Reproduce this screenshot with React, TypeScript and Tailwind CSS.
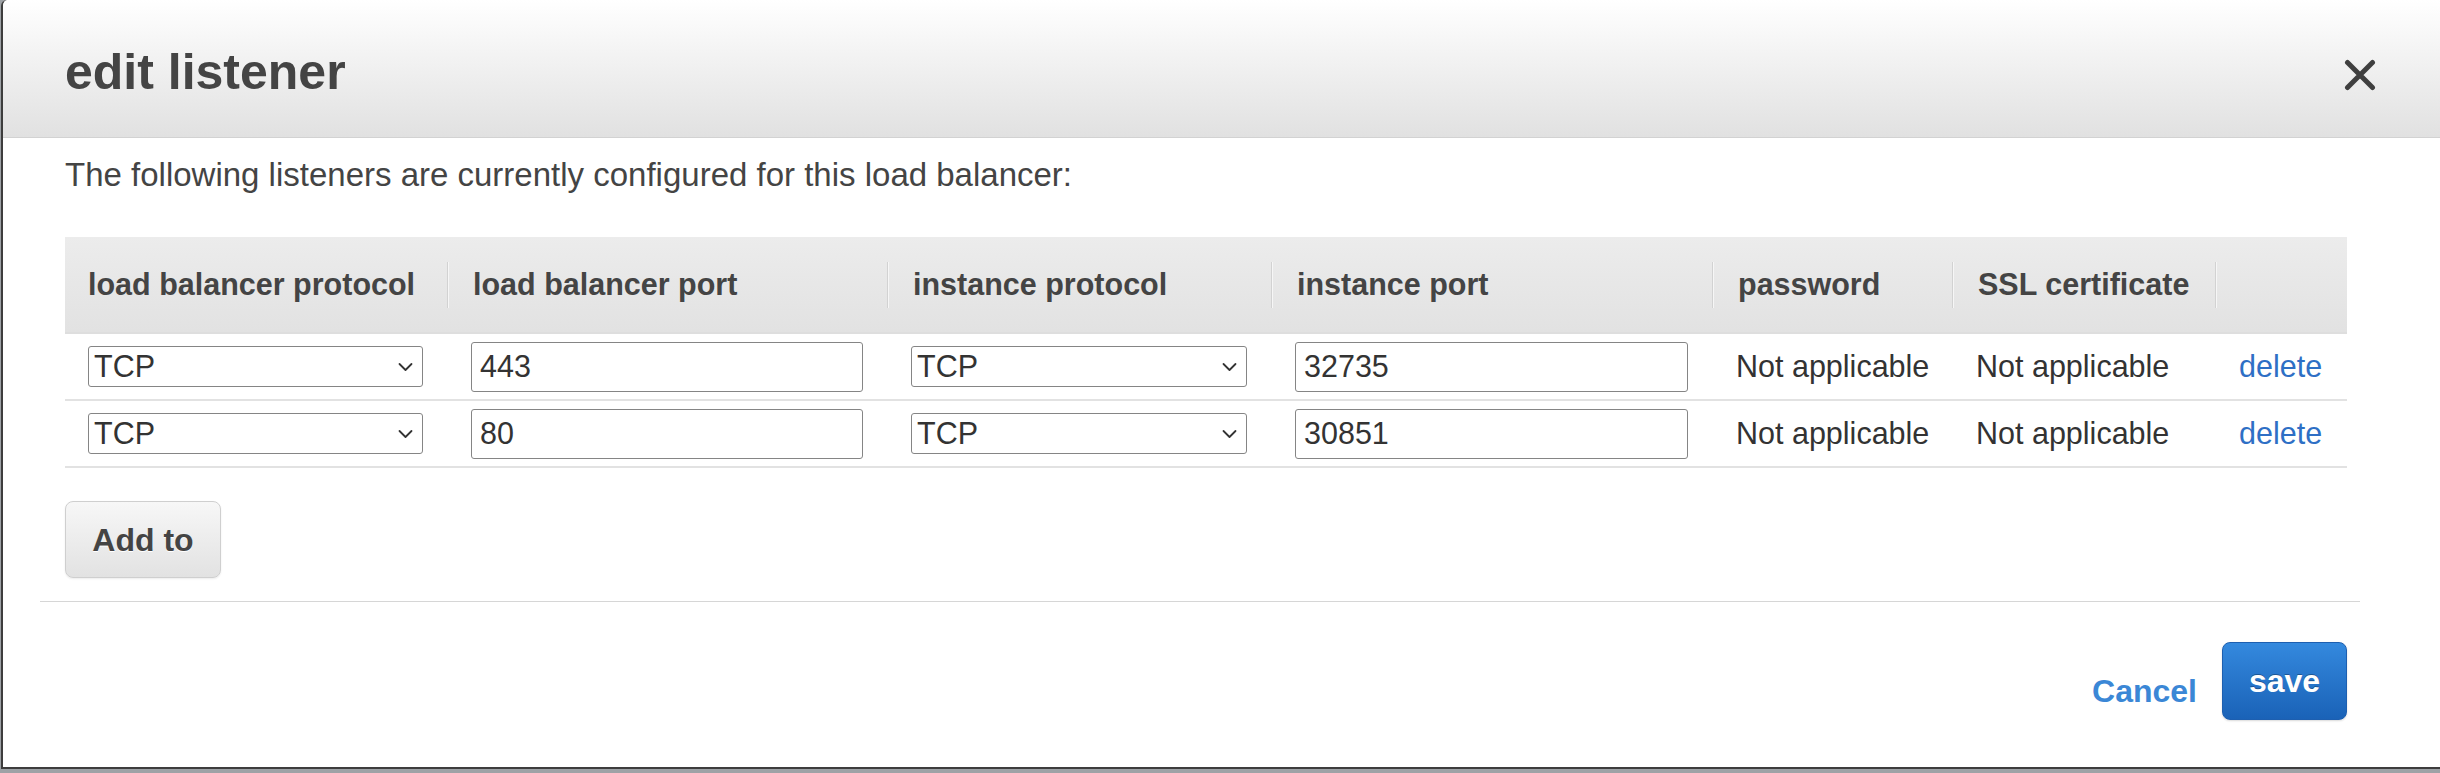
import React from "react";

const gridCols = "grid grid-cols-[382px_440px_384px_441px_240px_263px_132px]";

const headers = [
  "load balancer protocol",
  "load balancer port",
  "instance protocol",
  "instance port",
  "password",
  "SSL certificate",
  "",
];

const listeners = [
  { lbProtocol: "TCP", lbPort: "443", instProtocol: "TCP", instPort: "32735" },
  { lbProtocol: "TCP", lbPort: "80", instProtocol: "TCP", instPort: "30851" },
];

const Chevron = () => (
  <svg width="15" height="10" viewBox="0 0 15 10" fill="none">
    <path
      d="M1.5 2 L7.5 8 L13.5 2"
      stroke="#333"
      strokeWidth="1.8"
      strokeLinecap="round"
      strokeLinejoin="round"
    />
  </svg>
);

function ProtocolSelect({ value }: { value: string }) {
  return (
    <div className="flex h-[41px] w-full items-center justify-between rounded-[3px] border border-[#858585] bg-white pl-[5px] pr-[9px] text-[30.5px] leading-none text-[#333]">
      <span>{value}</span>
      <Chevron />
    </div>
  );
}

function PortInput({ value }: { value: string }) {
  return (
    <input
      type="text"
      defaultValue={value}
      className="h-[50px] w-full rounded-[3px] border border-[#858585] bg-white px-[8px] text-[30.5px] leading-none text-[#333] outline-none"
    />
  );
}

export default function App() {
  return (
    <div className="h-[773px] w-[2440px] overflow-hidden bg-[#9ea2a6] pl-[1px] font-['Liberation_Sans',Arial,sans-serif]">
      <div className="flex h-[769px] flex-col rounded-tl-[6px] border-b-2 border-l-2 border-[#3d3d3d] bg-white">
        {/* header */}
        <div className="flex h-[138px] items-start justify-between rounded-tl-[6px] border-b border-[#d2d2d2] bg-linear-to-b from-white to-[#e1e1e1] pl-[62px] pr-[64px] pt-[47px]">
          <h1 className="text-[50px] font-bold leading-none text-[#444]">edit listener</h1>
          <button className="mt-[12px]">
            <svg width="32" height="32" viewBox="0 0 32 32">
              <path d="M3.5 3.5 L28.5 28.5 M28.5 3.5 L3.5 28.5" stroke="#3f3f3f" strokeWidth="5" strokeLinecap="round" />
            </svg>
          </button>
        </div>

        {/* body */}
        <div className="pl-[62px] pr-[93px] pt-[20px]">
          <p className="text-[33px] leading-none text-[#444]">
            The following listeners are currently configured for this load balancer:
          </p>

          <div className="mt-[46px]">
            <div className={`${gridCols} h-[97px] border-b-2 border-[#dedede] bg-linear-to-b from-[#ececec] to-[#e2e2e2] text-[30.5px] font-bold leading-none text-[#444]`}>
              {headers.map((h, i) =>
                i === 0 ? (
                  <div key={i} className="flex items-center pl-[23px]">
                    {h}
                  </div>
                ) : (
                  <div key={i} className="flex items-center">
                    <div className="h-[46px] w-[2px] border-l border-r border-l-[#d2d2d2] border-r-[#f6f6f6]" />
                    <span className="pl-6">{h}</span>
                  </div>
                )
              )}
            </div>
            {listeners.map((l, i) => (
              <div
                key={i}
                className={`${gridCols} h-[67px] border-b-2 border-[#e2e2e2] text-[30.5px] leading-none text-[#333]`}
              >
                <div className="flex items-center pl-[23px] pr-6">
                  <ProtocolSelect value={l.lbProtocol} />
                </div>
                <div className="flex items-center px-6">
                  <PortInput value={l.lbPort} />
                </div>
                <div className="flex items-center px-6">
                  <ProtocolSelect value={l.instProtocol} />
                </div>
                <div className="flex items-center px-6">
                  <PortInput value={l.instPort} />
                </div>
                <div className="flex items-center px-6 whitespace-nowrap">Not applicable</div>
                <div className="flex items-center px-6 whitespace-nowrap">Not applicable</div>
                <div className="flex items-center px-6">
                  <a href="#" className="text-[#2e6fc5]">
                    delete
                  </a>
                </div>
              </div>
            ))}
          </div>

          <button className="mt-[33px] flex h-[77px] w-[156px] items-center justify-center rounded-[8px] border border-[#cfcfcf] bg-linear-to-b from-[#f7f7f7] to-[#e2e2e2] text-[32px] font-bold leading-none text-[#444] shadow-[0_1px_2px_rgba(0,0,0,0.08)] [text-shadow:0_1px_0_#fff]">
            Add to
          </button>
        </div>

        <div className="ml-[37px] mr-[80px] mt-[23px] h-px bg-[#d6d6d6]" />

        {/* footer */}
        <div className="flex items-start justify-end gap-[25px] pr-[93px] pt-[40px]">
          <a href="#" className="mt-[33px] text-[32px] font-bold leading-none text-[#3b87d6]">
            Cancel
          </a>
          <button className="flex h-[78px] w-[125px] items-center justify-center rounded-[8px] border border-[#1d5fb0] bg-linear-to-b from-[#3489de] to-[#1a62b7] text-[32px] font-bold leading-none text-white shadow-[0_1px_2px_rgba(0,0,0,0.15)] [text-shadow:0_-1px_0_rgba(0,0,0,0.3)]">
            save
          </button>
        </div>
      </div>
    </div>
  );
}
